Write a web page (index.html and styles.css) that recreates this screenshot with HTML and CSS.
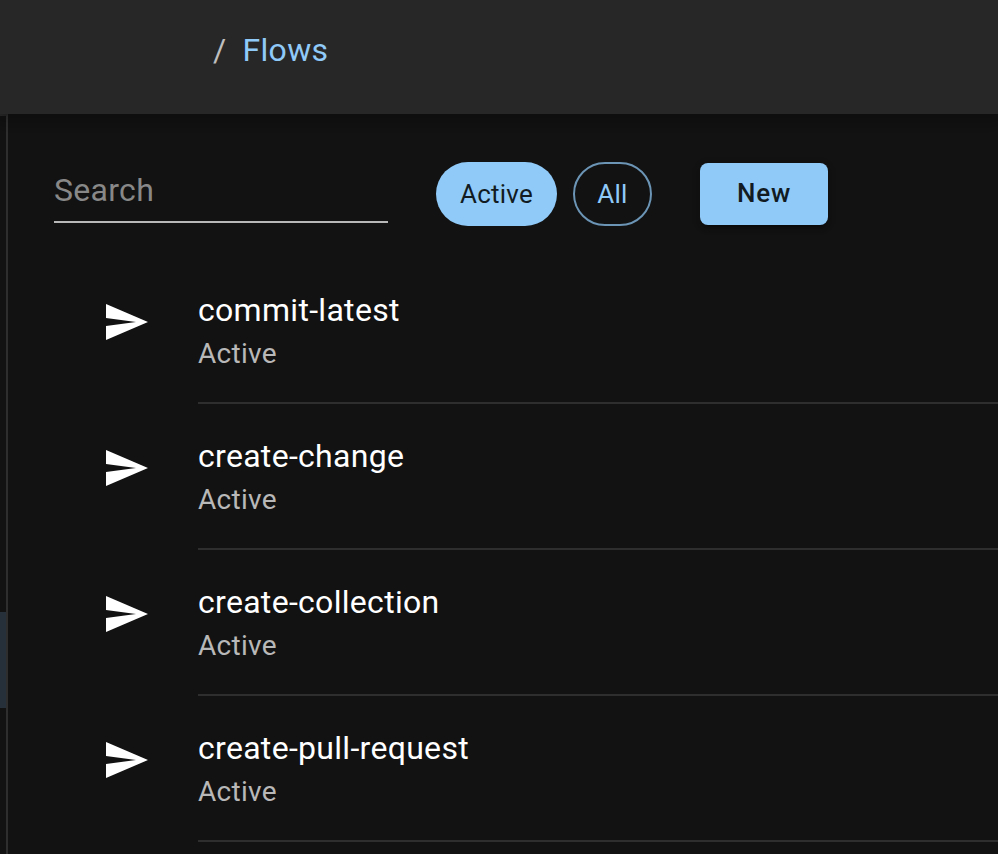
FILE: index.html
```html
<!DOCTYPE html>
<html lang="en">
<head>
<meta charset="utf-8">
<title>Flows</title>
<link rel="stylesheet" href="styles.css">
</head>
<body>
<svg class="defs" aria-hidden="true"><symbol id="send" viewBox="0 0 24 24"><path d="M2.01 21L23 12 2.01 3 2 10l15 2-15 2z"/></symbol></svg>
<div class="app">
  <header class="appbar">
    <nav class="crumbs"><span class="sep">/</span><a class="crumb">Flows</a></nav>
  </header>
  <div class="body">
    <aside class="sidebar"><div class="selected"></div></aside>
    <main class="content">
      <div class="toolbar">
        <input class="search" type="text" placeholder="Search">
        <div class="chips">
          <span class="chip filled">Active</span>
          <span class="chip outlined">All</span>
        </div>
        <button class="new">New</button>
      </div>
      <ul class="list">
        <li class="item"><svg class="icon"><use href="#send"/></svg><div class="text"><div class="name">commit-latest</div><div class="status">Active</div></div></li>
        <li class="item"><svg class="icon"><use href="#send"/></svg><div class="text"><div class="name">create-change</div><div class="status">Active</div></div></li>
        <li class="item"><svg class="icon"><use href="#send"/></svg><div class="text"><div class="name">create-collection</div><div class="status">Active</div></div></li>
        <li class="item"><svg class="icon"><use href="#send"/></svg><div class="text"><div class="name">create-pull-request</div><div class="status">Active</div></div></li>
      </ul>
    </main>
  </div>
</div>
</body>
</html>
```
FILE: styles.css
```css
* { box-sizing: border-box; }
body {
  margin: 0;
  background: #121212;
  color: #fff;
  font-family: Roboto, "Liberation Sans", sans-serif;
  -webkit-font-smoothing: antialiased;
}
.defs { display: block; width: 0; height: 0; }
.app { display: flex; flex-direction: column; height: 854px; overflow: hidden; }
.appbar {
  position: relative;
  z-index: 1;
  flex: none;
  height: 114px;
  padding: 26px 0 0 213px;
  background: #272727;
  box-shadow: 0 4px 8px -2px rgba(0,0,0,.08), 0 4px 10px rgba(0,0,0,.12), 0 2px 20px rgba(0,0,0,.08);
}
.crumbs { display: flex; gap: 16px; font-size: 32px; line-height: 48px; letter-spacing: .00938em; }
.sep { color: #bebebe; }
.crumb { color: #90caf9; }
.body { flex: 1; display: flex; min-height: 0; }
.sidebar {
  flex: none;
  width: 8px;
  padding-top: 496px;
  border-top: 2px solid #272727;
  border-right: 2px solid #2e2e2e;
}
.selected { height: 96px; background: #25303b; }
.content { flex: 1; min-width: 0; }
.toolbar { display: flex; align-items: center; height: 144px; padding: 16px 0 0 46px; }
.search {
  width: 334px;
  height: 64px;
  margin: -6px 48px 0 0;
  padding: 0 0 1px;
  border: 0;
  border-bottom: 2px solid #b8b8b8;
  border-radius: 0;
  outline: 0;
  background: transparent;
  color: #fff;
  font: 32px Roboto, sans-serif;
  letter-spacing: .00938em;
}
.search::placeholder { color: #888; opacity: 1; }
.chips { display: flex; gap: 16px; margin-right: 48px; }
.chip {
  display: flex;
  align-items: center;
  justify-content: center;
  height: 64px;
  border-radius: 32px;
  font-size: 26px;
  letter-spacing: .00938em;
}
.filled { width: 121px; background: #90caf9; color: #121b22; }
.outlined { width: 79px; border: 2px solid #6b94b5; color: #90caf9; }
.new {
  width: 128px;
  height: 62px;
  padding: 0 0 2px;
  border: 0;
  border-radius: 8px;
  background: #90caf9;
  color: #121b22;
  font: 500 26px Roboto, sans-serif;
  letter-spacing: .02857em;
  box-shadow: 0 6px 2px -4px rgba(0,0,0,.2), 0 4px 4px rgba(0,0,0,.14), 0 2px 10px rgba(0,0,0,.12);
}
.list { margin: 0; padding: 0; list-style: none; }
.item { display: flex; height: 146px; padding-left: 94px; }
.icon { flex: none; width: 48px; height: 48px; margin: 40px 48px 0 0; fill: #fff; }
.text { flex: 1; padding-top: 28px; border-bottom: 2px solid #2e2e2e; }
.name { font-size: 32px; line-height: 48px; letter-spacing: .00938em; }
.status { color: #b8b8b8; font-size: 28px; line-height: 40px; letter-spacing: .01071em; }
```
